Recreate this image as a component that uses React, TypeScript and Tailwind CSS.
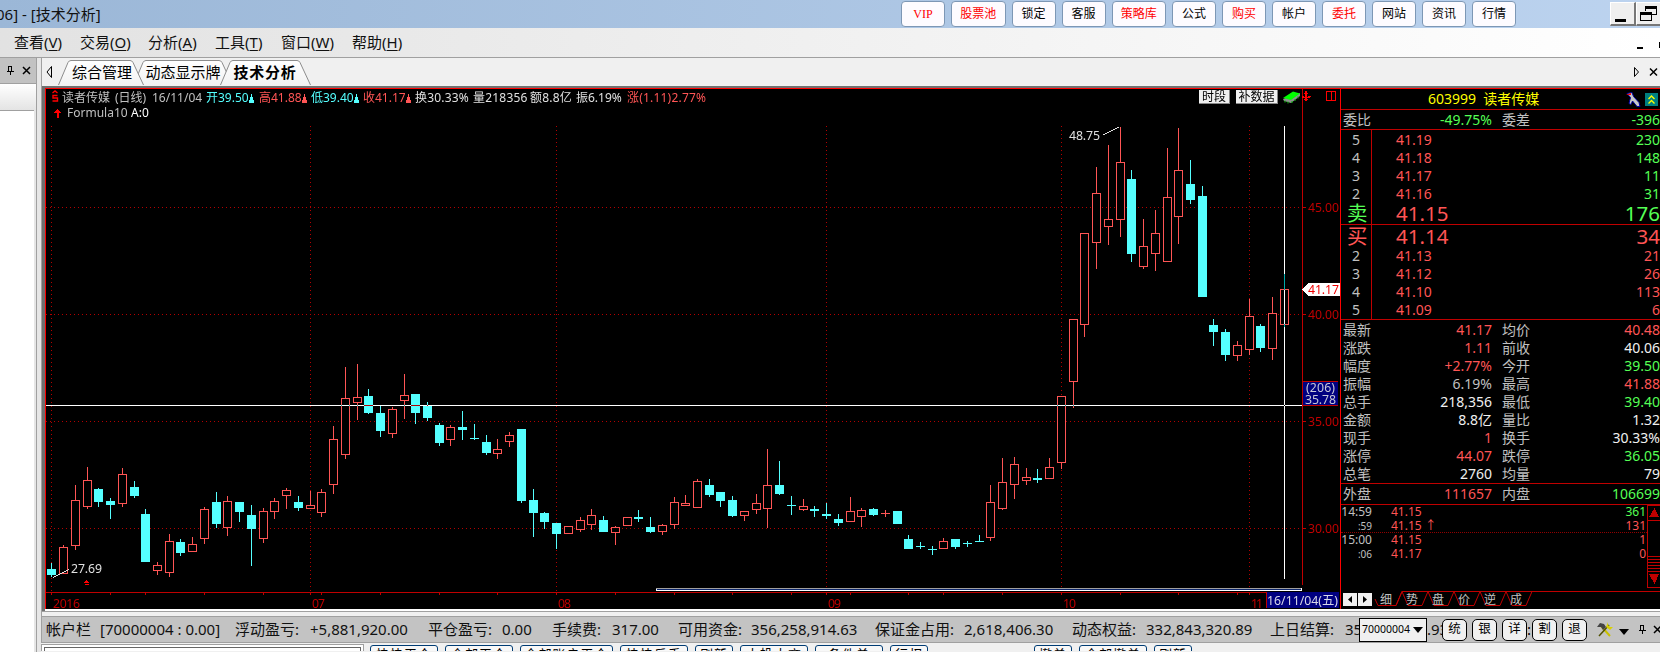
import clsx from 'clsx';

type Candle = [x: number, high: number, top: number, bottom: number, low: number, up: 0 | 1];

const CANDLES: Candle[] = [
  [51, 563, 569, 575, 577, 0], [63, 545, 547, 574, 574, 1], [75, 485, 500, 546, 550, 1],
  [87, 467, 480, 507, 509, 1], [98, 488, 489, 502, 507, 0], [110, 498, 501, 505, 519, 0],
  [122, 468, 474, 504, 507, 1], [134, 481, 487, 496, 498, 0], [145, 509, 514, 562, 562, 0],
  [157, 562, 565, 571, 575, 1], [169, 534, 541, 573, 577, 1], [180, 539, 542, 553, 556, 0],
  [192, 537, 544, 552, 552, 1], [204, 507, 509, 539, 544, 1], [216, 492, 502, 524, 528, 0],
  [227, 496, 501, 528, 536, 1], [239, 502, 502, 512, 522, 0], [251, 505, 515, 529, 566, 0],
  [263, 508, 511, 539, 543, 1], [274, 498, 501, 512, 519, 1], [286, 488, 490, 496, 509, 1],
  [298, 496, 502, 508, 511, 0], [310, 491, 505, 509, 509, 1], [321, 489, 492, 513, 517, 1],
  [333, 426, 439, 485, 494, 1], [345, 367, 398, 455, 459, 1], [357, 364, 397, 403, 420, 1],
  [368, 389, 396, 413, 414, 0], [380, 406, 413, 431, 437, 0], [392, 407, 409, 434, 438, 1],
  [404, 374, 395, 401, 419, 1], [415, 394, 394, 413, 424, 0], [427, 402, 406, 418, 421, 0],
  [439, 423, 425, 443, 446, 0], [450, 425, 427, 440, 446, 1], [462, 411, 427, 430, 440, 0],
  [474, 424, 438, 439, 440, 0], [486, 435, 442, 453, 455, 0], [497, 439, 449, 454, 459, 1],
  [509, 432, 435, 442, 447, 1], [521, 429, 429, 501, 503, 0], [533, 489, 500, 513, 537, 0],
  [544, 512, 513, 522, 529, 0], [556, 523, 523, 534, 549, 0], [568, 526, 526, 534, 534, 1],
  [580, 517, 520, 530, 532, 1], [591, 509, 515, 525, 530, 1], [603, 516, 520, 532, 532, 0],
  [615, 526, 527, 533, 545, 1], [627, 517, 517, 526, 526, 1], [638, 510, 517, 519, 522, 0],
  [650, 517, 527, 532, 533, 0], [662, 524, 525, 532, 535, 1], [674, 497, 502, 525, 529, 1],
  [685, 495, 503, 506, 506, 1], [697, 479, 481, 508, 508, 1], [709, 479, 485, 495, 497, 0],
  [720, 492, 492, 501, 507, 0], [732, 496, 500, 516, 517, 0], [744, 511, 511, 516, 521, 1],
  [756, 494, 503, 510, 514, 1], [767, 449, 485, 509, 528, 1], [779, 461, 485, 494, 495, 0],
  [791, 496, 505, 506, 515, 0], [803, 499, 506, 510, 511, 1], [814, 506, 509, 511, 517, 0],
  [826, 503, 514, 516, 519, 0], [838, 514, 519, 523, 526, 0], [850, 497, 511, 522, 522, 1],
  [861, 508, 510, 517, 527, 1], [873, 508, 509, 515, 516, 0], [885, 510, 513, 514, 517, 1],
  [897, 511, 511, 524, 524, 0], [908, 535, 539, 549, 549, 0], [920, 542, 546, 547, 549, 0],
  [932, 546, 549, 550, 555, 0], [943, 538, 541, 549, 549, 1], [955, 539, 539, 547, 549, 0],
  [967, 541, 543, 544, 547, 0], [979, 535, 541, 542, 542, 0], [990, 485, 502, 538, 541, 1],
  [1002, 458, 482, 509, 510, 1], [1014, 457, 464, 485, 499, 1], [1026, 468, 477, 481, 485, 1],
  [1037, 469, 478, 480, 483, 0], [1049, 458, 467, 479, 479, 1], [1061, 396, 396, 463, 469, 1],
  [1073, 319, 319, 382, 408, 1], [1084, 233, 233, 325, 337, 1], [1096, 167, 193, 243, 269, 1],
  [1108, 145, 219, 227, 245, 1], [1120, 127, 162, 220, 237, 1], [1131, 170, 179, 254, 262, 0],
  [1143, 219, 246, 267, 269, 1], [1155, 210, 233, 254, 271, 1], [1167, 148, 197, 262, 262, 1],
  [1178, 128, 170, 217, 244, 1], [1190, 160, 184, 200, 204, 0], [1202, 186, 196, 297, 297, 0],
  [1213, 319, 325, 332, 346, 0], [1225, 329, 332, 355, 361, 0], [1237, 341, 345, 356, 361, 1],
  [1249, 299, 316, 350, 355, 1], [1260, 324, 326, 348, 352, 0], [1272, 297, 313, 349, 360, 1],
  [1284, 274, 289, 325, 327, 1],
];

const MONTHS: [number, string, number][] = [
  [51, '2016', 27], [310, '07', 13], [556, '08', 13], [826, '09', 13], [1061, '10', 13], [1249, '11', 12],
];
const WEEK_TICKS = [51, 110, 145, 204, 263, 310, 321, 380, 439, 497, 556, 615, 674, 732, 791, 826, 850, 908, 943, 1002, 1061, 1120, 1178, 1237, 1249];
const PRICES: [number, string][] = [[207, '45.00'], [314, '40.00'], [421, '35.00'], [528, '30.00']];

const TOOL_BUTTONS: [string, boolean][] = [
  ['VIP', true], ['股票池', true], ['锁定', false], ['客服', false], ['策略库', true], ['公式', false],
  ['购买', true], ['帐户', false], ['委托', true], ['网站', false], ['资讯', false], ['行情', false],
];

const MENUS: [string, string, string][] = [
  ['查看', 'V', 'w-[66px]'], ['交易', 'O', 'w-[68px]'], ['分析', 'A', 'w-[67px]'],
  ['工具', 'T', 'w-[66px]'], ['窗口', 'W', 'w-[71px]'], ['帮助', 'H', 'w-[66px]'],
];

const RED = 'text-[#ff5555]';
const GREEN = 'text-[#55ff55]';
const WHITE = 'text-[#f0f0f0]';
const GRAY = 'text-[#c0c0c0]';

const ASKS = [['5', '41.19', '230'], ['4', '41.18', '148'], ['3', '41.17', '11'], ['2', '41.16', '31']];
const BIDS = [['2', '41.13', '21'], ['3', '41.12', '26'], ['4', '41.10', '113'], ['5', '41.09', '6']];

const DETAILS: [string, string, string, string, string, string][] = [
  ['最新', '41.17', RED, '均价', '40.48', RED],
  ['涨跌', '1.11', RED, '前收', '40.06', WHITE],
  ['幅度', '+2.77%', RED, '今开', '39.50', GREEN],
  ['振幅', '6.19%', GRAY, '最高', '41.88', RED],
  ['总手', '218,356', WHITE, '最低', '39.40', GREEN],
  ['金额', '8.8亿', WHITE, '量比', '1.32', WHITE],
  ['现手', '1', RED, '换手', '30.33%', WHITE],
  ['涨停', '44.07', RED, '跌停', '36.05', GREEN],
  ['总笔', '2760', WHITE, '均量', '79', WHITE],
];

const TRADES: [string, boolean, string, string, string][] = [
  ['14:59', false, '41.15', '361', GREEN],
  [':59', true, '41.15 ↑', '131', RED],
  ['15:00', false, '41.15', '1', RED],
  [':06', true, '41.17', '0', RED],
];

const ACCOUNT: [string, string][] = [
  ['帐户栏', 'w-[54px]'], ['[70000004 : 0.00]', 'w-[135px]'],
  ['浮动盈亏:', 'w-[75px]'], ['+5,881,920.00', 'w-[118px]'],
  ['平仓盈亏:', 'w-[74px]'], ['0.00', 'w-[50px]'],
  ['手续费:', 'w-[60px]'], ['317.00', 'w-[66px]'],
  ['可用资金:', 'w-[73px]'], ['356,258,914.63', 'w-[124px]'],
  ['保证金占用:', 'w-[89px]'], ['2,618,406.30', 'w-[108px]'],
  ['动态权益:', 'w-[74px]'], ['332,843,320.89', 'w-[124px]'],
  ['上日结算:', 'w-[75px]'], ['35', 'w-[14px]'],
];

function TitleBar() {
  return (
    <div className="flex h-7 shrink-0 bg-linear-to-r from-[#9bb7d7] to-[#bcd3ef]">
      <div className="-ml-[4px] w-[905px] pt-[3px] text-[15px] leading-[22px] whitespace-nowrap text-[#111]">06] - [技术分析]</div>
      <div className="flex gap-[6px] pt-px">
        {TOOL_BUTTONS.map(([label, hot]) => (
          <div
            key={label}
            className={clsx(
              'flex h-[26px] items-center justify-center rounded-[4px] border border-[#7d97b5] bg-[#fdfbff] text-[12px]',
              label.length === 3 && label !== 'VIP' ? 'w-[54.500px]' : 'w-[44px]',
              label === 'VIP' && "font-['Liberation_Serif'] text-[11px]",
              hot ? 'text-[#f00]' : 'text-black',
            )}
          >
            {label}
          </div>
        ))}
      </div>
      <div className="ml-auto flex w-[50px] shrink-0 overflow-hidden pt-[2px]">
        <div className="flex h-6 w-[26px] shrink-0 items-end border-t border-r-2 border-b-2 border-l border-t-white border-r-[#777] border-b-[#777] border-l-white bg-[#efefef] pb-[2px] pl-1">
          <div className="h-[3px] w-[11px] bg-black" />
        </div>
        <div className="h-6 w-[26px] shrink-0 border-t border-b-2 border-l border-t-white border-b-[#777] border-l-white bg-[#efefef]">
          <svg width="24" height="20" viewBox="0 0 24 20" fill="none" stroke="#000" shapeRendering="crispEdges">
            <path d="M8 4.500h11v7h-4M8.500 4v4M3.500 10.500h11v7h-11z" />
            <path d="M8 4.500h12M3 10.500h12" strokeWidth="3" />
          </svg>
        </div>
      </div>
    </div>
  );
}

function MenuBar() {
  return (
    <div className="flex h-[29px] shrink-0 bg-linear-to-r from-[#e2e2e2] to-white pl-[14px] text-[15px] leading-[29px] text-[#111]">
      {MENUS.map(([name, key, w]) => (
        <div key={key} className={clsx('whitespace-nowrap', w)}>
          {name}(<span className="underline underline-offset-2">{key}</span>)
        </div>
      ))}
      <div className="ml-auto flex w-[23px] items-center justify-between">
        <div className="mt-[10px] h-[2px] w-[6px] bg-black" />
        <div className="mt-1 h-[6px] w-px bg-black" />
      </div>
    </div>
  );
}

function Tab({ label, width, className }: { label: string; width: number; className?: string }) {
  return (
    <div className={clsx('relative flex h-[25px] items-center justify-center', className)} style={{ width }}>
      <svg className="absolute inset-0" width={width} height="25">
        <defs>
          <linearGradient id="tab" x1="0" y1="0" x2="0" y2="1">
            <stop offset="0" stopColor="#fff" />
            <stop offset="1" stopColor="#f2f2f2" />
          </linearGradient>
        </defs>
        <path
          d={`M0.5 25L10 2.5Q11 .5 13 .5H${width - 14}Q${width - 12} .5 ${width - 11} 2.5L${width - 0.5} 25`}
          fill="url(#tab)"
          stroke="#8c8c8c"
        />
      </svg>
      <span className="relative whitespace-nowrap">{label}</span>
    </div>
  );
}

function TabBar() {
  return (
    <div className="flex h-7 shrink-0 items-start bg-[#f0f0f0] pt-[2px] text-[15px] text-black">
      <svg width="16" height="25" className="shrink-0">
        <path d="M9.500 6.500v11l-4.500-5.500z" fill="none" stroke="#000" />
      </svg>
      <Tab label="综合管理" width={86} className="z-10 pl-[2px]" />
      <Tab label="动态显示牌" width={100} className="-ml-[11px]" />
      <Tab label="技术分析" width={91} className="z-10 -ml-[13px] pr-px font-bold tracking-[0.800px]" />
      <svg width="30" height="25" className="ml-auto">
        <path d="M4.500 7.500v9l4-4.500z" fill="none" stroke="#000" />
        <path d="M20 8.500l7 7M27 8.500l-7 7" stroke="#000" strokeWidth="1.500" />
      </svg>
    </div>
  );
}

function Pin({ className }: { className?: string }) {
  return (
    <svg width="8" height="9" viewBox="0 0 8 9" className={className} shapeRendering="crispEdges">
      <path d="M1 5.500h7M2.500 5V.5h3V5M5.500 0v5M4.500 6v3" fill="none" stroke="#000" />
    </svg>
  );
}

function LeftPane() {
  return (
    <div className="flex w-[41px] shrink-0 bg-[#e6e6e6]">
      <div className="flex w-[37px] flex-col border-r border-[#a0a0a0]">
        <div className="flex h-[26px] items-center justify-end border-b border-[#a0a0a0] bg-[#c2c2c2] pr-[5px]">
          <Pin className="mr-2" />
          <svg width="9" height="9">
            <path d="M1 1l7 7M8 1l-7 7" stroke="#000" strokeWidth="1.500" />
          </svg>
        </div>
        <div className="h-[26px] bg-linear-to-b from-white to-[#e4e4e4]" />
        <div className="mr-[2px] flex-1 border-t border-[#a0a0a0] bg-white" />
      </div>
    </div>
  );
}

function Flag({ color }: { color: string }) {
  return (
    <svg width="5" height="9" className="mt-[4px] shrink-0" shapeRendering="crispEdges">
      <path d="M2 0h1v3h1v3h1v3H0V6h1V3h1z" fill={color} />
    </svg>
  );
}

function ChartHeader() {
  return (
    <div className="relative h-8 pt-px text-[12px] leading-[16px] whitespace-nowrap">
      <div className="flex h-4 pl-[5px]">
        <svg width="11" height="13" className="shrink-0" fill="none" stroke="#f00" strokeWidth="1.400">
          <path d="M1.500 3L4 1l2.500 2M6.500 5.500H2v2.500h4.500v3H1.500" />
        </svg>
        <span className="w-[53px] text-[#c0c0c0]">读者传媒</span>
        <span className="w-[37px] text-[#c0c0c0]">(日线)</span>
        <span className="w-[54px] text-[#c0c0c0]">16/11/04</span>
        <span className="w-[43px] text-[#55ffff]">开39.50</span>
        <Flag color="#55ffff" />
        <span className="ml-[5px] w-[43px] text-[#ff5555]">高41.88</span>
        <Flag color="#ff5555" />
        <span className="ml-1 w-[43px] text-[#55ffff]">低39.40</span>
        <Flag color="#55ffff" />
        <span className="ml-1 w-[43px] text-[#ff5555]">收41.17</span>
        <Flag color="#ff5555" />
        <span className="ml-1 w-[58px] tracking-[0.200px] text-[#e0e0e0]">换30.33%</span>
        <span className="w-[57px] tracking-[0.200px] text-[#e0e0e0]">量218356</span>
        <span className="w-[46px] tracking-[0.200px] text-[#e0e0e0]">额8.8亿</span>
        <span className="w-[51px] text-[#e0e0e0]">振6.19%</span>
        <span className="tracking-[0.200px] text-[#ff5555]">涨(1.11)2.77%</span>
        <div className="mr-[39px] ml-auto flex">
          <div className="mr-[6px] h-[14px] w-[31px] border-r border-b border-[#888] bg-[#f0f0f0] text-center leading-[14px] text-black">时段</div>
          <div className="mr-[5px] h-[14px] w-[42px] border-r border-b border-[#888] bg-[#f0f0f0] text-center leading-[14px] text-black">补数据</div>
          <svg width="18" height="14">
            <path d="M0 9L1 11l7 2 9-7V3z" fill="#909090" />
            <path d="M0 8L10 1.500l7 2L8 10z" fill="#00ff00" />
            <path d="M2 10.500v2M5 11.500v2M9 11v2M12 9v2M15 6.500v2" stroke="#00c000" />
          </svg>
        </div>
      </div>
      <div className="flex h-[14px] pl-[7px] leading-[14px]">
        <svg width="14" height="14" className="shrink-0" shapeRendering="crispEdges">
          <path d="M4 12V7H1V6h1V5h1V4h1V3h1v1h1v1h1v1h1v1H6v5z" fill="#f00" />
        </svg>
        <span className="w-[64px] text-[#c0c0c0]">Formula10</span>
        <span className="text-white">A:0</span>
      </div>
    </div>
  );
}

function Chart() {
  return (
    <div className="relative isolate w-[1294px] shrink-0 bg-black">
      <svg className="absolute inset-0" width="1294" height="520" viewBox="46 89 1294 520" shapeRendering="crispEdges" fontSize="12.3">
        <g stroke="#b40000" strokeDasharray="1 3">
          {PRICES.map(([y]) => <path key={y} d={`M46 ${y + 0.5}H1302`} />)}
          {MONTHS.map(([x]) => <path key={x} d={`M${x + 0.5} 126V592`} />)}
        </g>
        <g stroke="#c00000">
          <path d="M1302.500 89V585M46 592.500H1266" />
          {PRICES.map(([y]) => <path key={y} d={`M1302 ${y + 0.5}h4`} />)}
          {WEEK_TICKS.map((x) => <path key={x} d={`M${x + 0.5} 592v3`} />)}
        </g>
        {CANDLES.map(([x, high, top, bottom, low, up]) => (
          <g key={x} fill={up ? '#ff5555' : '#55ffff'}>
            <rect x={x} y={high} width="1" height={top - high} />
            <rect x={x} y={bottom} width="1" height={low - bottom} />
            {up && bottom - top > 1 ? (
              <rect x={x - 3.5} y={top + 0.5} width="8" height={bottom - top - 1} fill="#000" stroke="#ff5555" />
            ) : (
              <rect x={x - 4} y={top} width="9" height={bottom - top} />
            )}
          </g>
        ))}
        <g fill="#c00000">
          {PRICES.map(([y, label]) => <text key={y} x="1308" y={y + 5} textLength="31">{label}</text>)}
          {MONTHS.map(([x, label, w]) => <text key={x} x={x + 2} y="608" textLength={w}>{label}</text>)}
        </g>
        <g fill="#e0e0e0" stroke="none">
          <text x="1069" y="140" textLength="31">48.75</text>
          <text x="71" y="573" textLength="31">27.69</text>
          <path d="M1103 135L1119 127M53 577.500L69 569.500" stroke="#e0e0e0" />
        </g>
        <path d="M86 580h1v1h1v1h1v1h-5v-1h1v-1h1zM85 584h4v1h-4z" fill="#f00" />
        {/* range scroller */}
        <rect x="656" y="588" width="646" height="3" fill="#fff" />
        <path d="M656 588.500h645" stroke="#a0a0a0" />
        <path d="M657 589.500h644" stroke="#0a246a" />
        {/* crosshair */}
        <g className="mix-blend-difference" fill="#fff">
          <rect x="46" y="405" width="1256" height="1" />
        </g>
        <g className="mix-blend-difference" fill="#fff">
          <rect x="1284" y="126" width="1" height="453" />
        </g>
        <path d="M1302 289.500L1308 283H1340V296H1308z" fill="#fff" />
        <text x="1308" y="294" textLength="31" fill="#f00000">41.17</text>
        <rect x="1303" y="381" width="35" height="25" fill="#000080" />
        <path d="M1303 381.500h35M1303 405.500h35" stroke="#c00000" />
        <g fill="#c8c8d8">
          <text x="1306" y="392" textLength="29">(206)</text>
          <text x="1305" y="404" textLength="31">35.78</text>
        </g>
        <rect x="1266" y="592" width="73" height="16" fill="#000080" />
        <path d="M1266.500 592v16" stroke="#c00000" />
        <text x="1267" y="605" textLength="71" fill="#d8d8e8">16/11/04(五)</text>
        {/* pane handles */}
        <g fill="none" stroke="#f00">
          <path d="M1305.500 91v10M1306.500 91v10M1304 93.500h4M1302 96.500h2M1308 96.500h3M1302 97.500h8M1304 99.500h4" />
          <path d="M1326.500 91.500h9v9h-9zM1331.500 92v8" />
        </g>
      </svg>
      <ChartHeader />
    </div>
  );
}

function BookRow({ level, price, volume, color }: { level: string; price: string; volume: string; color: string }) {
  return (
    <div className="flex h-[18px] items-center leading-[18px]">
      <span className="w-[30px] text-center text-[#c0c0c0]">{level}</span>
      <span className="ml-[25px] text-[#ff5555]">{price}</span>
      <span className={clsx('ml-auto', color)}>{volume}</span>
    </div>
  );
}

function BookMain({ side, price, volume, sideColor, className }: { side: string; price: string; volume: string; sideColor: string; className?: string }) {
  return (
    <div className={clsx('flex items-center text-[20.500px] leading-[20px]', className)}>
      <span className={clsx('w-[30px] pl-[6px]', sideColor)}>{side}</span>
      <span className="ml-[25px] text-[#ff5555]">{price}</span>
      <span className={clsx('ml-auto', sideColor)}>{volume}</span>
    </div>
  );
}

function QuotePane() {
  return (
    <div className="flex w-[320px] shrink-0 flex-col border-l border-[#f00] bg-black text-[14px]">
      <div className="flex h-[21px] items-center justify-between border-b border-[#c00000] leading-5 text-[#ffff00]">
        <span className="ml-[87px] whitespace-pre">603999  读者传媒</span>
        <div className="mr-[2px] flex items-center gap-1">
          <svg width="16" height="15">
            <path d="M2 1.500l5-1 1.500 4 5.500 6 1 4h-3l-4.500-5.500-1.500 3.500-2-1 1.500-6z" fill="#c8c8c8" stroke="#0000a0" />
            <path d="M1 3l5-2v2z" fill="#f00" />
          </svg>
          <svg width="13" height="13">
            <rect width="13" height="13" fill="#008080" />
            <path d="M3.500 6l3-3 3 3M3.500 10.500l3-3 3 3" fill="none" stroke="#ff0" strokeWidth="1.400" />
          </svg>
        </div>
      </div>
      <div className="flex h-5 border-b border-[#c00000] pl-[2px] leading-[20px] text-[#c0c0c0]">
        <span>委比</span>
        <span className="ml-auto text-[#55ff55]">-49.75%</span>
        <span className="ml-[10px] w-[28px]">委差</span>
        <span className="w-[130px] text-right text-[#55ff55]">-396</span>
      </div>
      <div className="relative">
        <div className="absolute inset-y-0 left-[30px] w-px bg-[#c00000]" />
        <div className="h-[95px] border-b border-[#c00000]">
          <div className="pt-px">
            {ASKS.map(([level, price, volume]) => (
              <BookRow key={level} level={level} price={price} volume={volume} color={GREEN} />
            ))}
          </div>
          <BookMain side="卖" price="41.15" volume="176" sideColor={GREEN} className="h-5" />
        </div>
        <div className="h-[95px] border-b border-[#c00000]">
          <BookMain side="买" price="41.14" volume="34" sideColor={RED} className="h-[22px]" />
          {BIDS.map(([level, price, volume]) => (
            <BookRow key={level} level={level} price={price} volume={volume} color={RED} />
          ))}
        </div>
      </div>
      <div className="h-[164px] border-b border-[#c00000] pt-px">
        {DETAILS.map(([l1, v1, c1, l2, v2, c2]) => (
          <div key={l1} className="flex h-[18px] pl-[2px] leading-[18px] text-[#c0c0c0]">
            <span>{l1}</span>
            <span className={clsx('ml-auto', c1)}>{v1}</span>
            <span className="ml-[10px] w-[28px]">{l2}</span>
            <span className={clsx('w-[130px] text-right', c2)}>{v2}</span>
          </div>
        ))}
      </div>
      <div className="flex h-[21px] border-b border-[#c00000] pl-[2px] leading-[20px] text-[#c0c0c0]">
        <span>外盘</span>
        <span className="ml-auto text-[#ff5555]">111657</span>
        <span className="ml-[10px] w-[28px]">内盘</span>
        <span className="w-[130px] text-right text-[#55ff55]">106699</span>
      </div>
      <div className="flex h-[86px]">
        <div className="flex-1 text-[12px]">
          {TRADES.map(([time, small, price, volume, color], i) => (
            <div key={time} className={clsx('relative flex h-[14px] leading-[14px]', color)}>
              <span className={clsx('w-[31px] text-right text-[#c0c0c0]', small && 'text-[10px]')}>{time}</span>
              <span className="ml-[19px] text-[#ff5555]">{price}</span>
              <span className="mr-px ml-auto">{volume}</span>
              {i === 1 && <div className="absolute inset-x-0 bottom-0 border-b border-dotted border-[#900000]" />}
            </div>
          ))}
        </div>
        <svg width="13" height="83" shapeRendering="crispEdges" fill="none" stroke="#c00000">
          <path d="M13 .5H.5V82.500H13M0 15.500H13M0 51.500H13M0 54.500H13M0 57.500H13M0 60.500H13M0 63.500H13M0 66.500H13" />
          <path d="M2 12h10L7.500 3zM2 69h10L7.500 79z" fill="#c00000" stroke="none" />
        </svg>
      </div>
      <div className="relative flex h-[18px] pl-[2px]">
        <div className="mt-[2px] mr-px flex h-[13px] w-[14px] items-center justify-center bg-[#f0f0f0]">
          <svg width="4" height="7"><path d="M4 0v7L0 3.500z" /></svg>
        </div>
        <div className="mt-[2px] flex h-[13px] w-[14px] items-center justify-center bg-[#f0f0f0]">
          <svg width="4" height="7"><path d="M0 0v7l4-3.500z" /></svg>
        </div>
        <svg className="absolute inset-0" width="319" height="16" fill="none" stroke="#c00000">
          <path d="M319 .5H61L55 14.500H37L34 8M61 .5L67 14.500H81L87 .5L93 14.500H107L113 .5L119 14.500H133L139 .5L145 14.500H159L165 .5M55 14.500L61 .5M165 .5L171 14.500H185L191 .5" />
        </svg>
        <div className="relative ml-[7px] flex text-[12px] leading-[17px] text-[#c0c0c0]">
          {['细', '势', '盘', '价', '逆', '成'].map((t) => (
            <span key={t} className="w-[26px] pl-px">{t}</span>
          ))}
        </div>
      </div>
    </div>
  );
}

function AccountBar() {
  return (
    <div className="flex h-[27px] shrink-0 items-center border border-r-0 border-[#a0a0a0] bg-[#c3c3c3] pl-[4px] text-[15px] text-[#111]">
      {ACCOUNT.map(([text, w]) => (
        <span key={text} className={clsx('shrink-0 whitespace-nowrap', w)}>{text}</span>
      ))}
      <div className="flex h-6 w-[68px] shrink-0 items-center justify-between border border-black bg-[#f0f0f0] pr-[3px] pl-[2px] text-[10.500px] text-black">
        70000004
        <svg width="10" height="6" className="shrink-0"><path d="M0 0h10L5 6z" /></svg>
      </div>
      <span className="w-[15px] shrink-0 overflow-hidden">.93</span>
      <div className="flex shrink-0 items-center text-[12.500px] text-black">
        {['统', '银', '详', '割', '退'].map((t, i) => (
          <div key={t} className="flex items-center">
            <div className="flex h-[22px] w-[25px] items-center justify-center rounded-[5px] border border-black bg-[#f0f0f0]">{t}</div>
            <span className="w-[5px] overflow-hidden text-[15px]">{i === 2 ? ':' : ''}</span>
          </div>
        ))}
      </div>
      <svg width="16" height="16" className="ml-[5px] shrink-0">
        <path d="M4 4l9 10" stroke="#c8c000" strokeWidth="2" />
        <path d="M12 3L2 14" stroke="#505000" strokeWidth="1.500" />
        <path d="M0 5l3-4 4 1 2 3-3 3-2-3z" fill="#444" />
        <path d="M11 0v3l2 2h3l-3 3-4-3z" fill="#d8d000" />
      </svg>
      <svg width="10" height="6" className="mt-1 ml-[6px] shrink-0"><path d="M0 0h10L5 6z" /></svg>
      <Pin className="ml-[9px] shrink-0" />
      <svg width="8" height="9" className="ml-[7px] shrink-0">
        <path d="M1 1l7 7M8 1L1 8" stroke="#000" strokeWidth="1.500" />
      </svg>
    </div>
  );
}

const ORDER_BUTTONS: [string, string][] = [
  ['快快平仓', 'w-[68px]'], ['全部平仓', 'w-[68px]'], ['全部账户平仓', 'w-[93px]'], ['快快反手', 'w-[68px]'],
  ['刷新', 'w-[38px]'], ['大投大商', 'w-[68px]'], ['条件单', 'w-[68px]'], ['行权', 'w-[38px] mr-[99px]'],
  ['撤单', 'w-[38px]'], ['全部撤单', 'w-[68px]'], ['刷新 ', 'w-[38px]'],
];

function OrderBar() {
  return (
    <div className="mt-px flex h-[7px] overflow-hidden bg-[#f0f0f0]">
      <div className="mr-[6px] h-4 w-[323px] shrink-0 border border-[#a0a0a0] bg-white p-[2px]">
        <div className="h-4 border border-[#666] bg-white" />
      </div>
      <div className="flex gap-[7px]">
        {ORDER_BUTTONS.map(([label, w]) => (
          <div key={label} className={clsx('mt-px h-[22px] rounded-[3px] border border-[#003c74] bg-[#f8f8f8] text-center text-[13px] leading-[17px] tracking-[1px] text-black', w)}>
            {label}
          </div>
        ))}
      </div>
    </div>
  );
}

export default function App() {
  return (
    <div className="flex h-[652px] w-[1660px] flex-col overflow-hidden bg-[#f0f0f0] font-['Noto_Sans','Noto_Sans_CJK_SC',sans-serif]">
      <TitleBar />
      <MenuBar />
      <div className="flex flex-1 border-t border-[#a0a0a0]">
        <LeftPane />
        <div className="flex w-[1619px] shrink-0 flex-col">
          <div className="flex flex-col border-l border-[#a0a0a0]">
            <TabBar />
            <div className="flex h-[525px] border-t-2 border-l-[3px] border-[#707070]">
              <div className="flex h-[523px] w-full flex-col border-b-2 border-white">
                <div className="flex h-[521px] border-t border-l border-[#f00]">
                  <Chart />
                  <QuotePane />
                </div>
              </div>
            </div>
            <div className="h-[5px] border-t border-[#a0a0a0]" />
          </div>
          <AccountBar />
          <OrderBar />
        </div>
      </div>
    </div>
  );
}
